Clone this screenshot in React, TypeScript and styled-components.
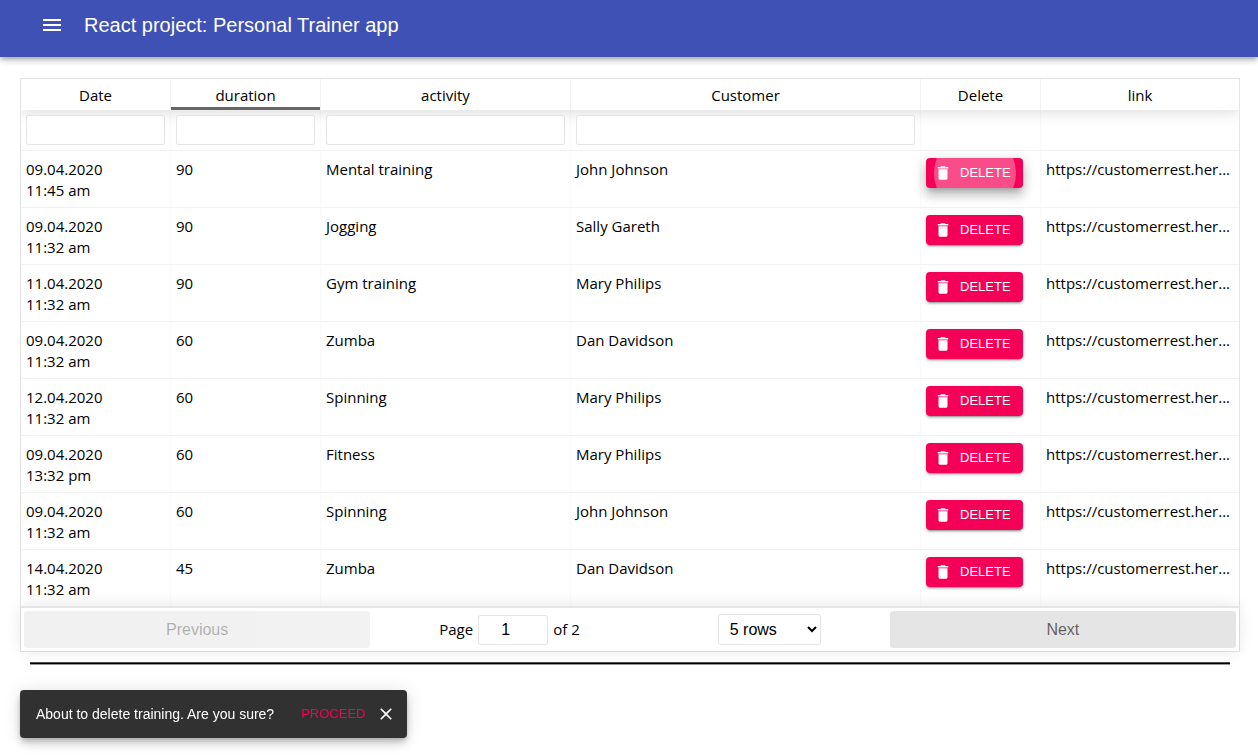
import React, { useState } from "react";
import styled, { createGlobalStyle, css } from "styled-components";

const sans = `"Liberation Sans", Arial, Helvetica, sans-serif`;
const body = `"Open Sans", "Noto Sans", sans-serif`;

const GlobalStyle = createGlobalStyle`
  * { box-sizing: border-box; }
  body { margin: 0; background: #fff; color: #000; font-family: ${body}; font-size: 15px; line-height: 21px; }
`;

const AppBar = styled.header`
  display: flex;
  align-items: center;
  gap: 8px;
  padding: 1px 28px 8px;
  color: #fff;
  background: #3f51b5;
  box-shadow: 0 2px 4px -1px rgba(0, 0, 0, 0.2), 0 4px 5px 0 rgba(0, 0, 0, 0.14), 0 1px 10px 0 rgba(0, 0, 0, 0.12);
`;

const MenuButton = styled.button`
  display: flex;
  padding: 12px;
  border: 0;
  color: inherit;
  background: transparent;
`;

const Icon = styled.svg<{ $size: number }>`
  display: block;
  flex: none;
  width: ${(p) => p.$size}px;
  height: ${(p) => p.$size}px;
  fill: currentColor;
`;

const Title = styled.h1`
  margin: 0;
  font: 400 20px/32px ${sans};
`;

const Main = styled.main`
  padding: 21px 18px 100px 20px;
`;

const Grid = styled.section`
  border: 1px solid rgba(0, 0, 0, 0.1);
`;

const TableClip = styled.div`
  overflow: hidden;
`;

const Table = styled.table`
  width: 100%;
  table-layout: fixed;
  border-collapse: separate;
  border-spacing: 0;
`;

const Col = styled.col<{ $width?: number }>`
  width: ${(p) => (p.$width ? `${p.$width}px` : "auto")};
`;

const Head = styled.thead`
  box-shadow: 0 2px 15px 0 rgba(0, 0, 0, 0.15);
`;

const HeadCell = styled.th<{ $sorted?: boolean }>`
  height: 31px;
  padding: 2px 5px 0;
  font-weight: 400;
  text-align: center;
  border-right: 1px solid rgba(0, 0, 0, 0.05);
  box-shadow: ${(p) => (p.$sorted ? "inset 0 -3px 0 0 rgba(0, 0, 0, 0.6)" : "none")};

  &:last-child { border-right: 0; }
`;

const Cell = styled.td`
  height: 57px;
  padding: 8px 5px 6px;
  vertical-align: top;
  overflow: hidden;
  white-space: nowrap;
  border-right: 1px solid rgba(0, 0, 0, 0.02);
  border-bottom: 1px solid rgba(0, 0, 0, 0.05);

  &:last-child { border-right: 0; }
`;

const FilterCell = styled(Cell)`
  height: 41px;
  padding: 5px;
`;

const BodyRow = styled.tr`
  &:last-child > td { height: 56px; border-bottom: 0; }
`;

const DateText = styled.time`
  display: block;
  width: 90px;
  white-space: normal;
`;

const field = css`
  border: 1px solid rgba(0, 0, 0, 0.1);
  border-radius: 3px;
  background: #fff;
  color: #000;
  outline: none;
`;

const FilterInput = styled.input`
  ${field}
  display: block;
  width: 100%;
  height: 30px;
  padding: 5px 7px;
  font: 400 15px/18px ${body};
`;

const ButtonCell = styled(Cell)`
  padding-top: 7px;
  overflow: visible;
`;

const DeleteButton = styled.button<{ $pressed?: boolean }>`
  position: relative;
  display: flex;
  align-items: center;
  gap: 8px;
  width: 97px;
  height: 30px;
  padding: 0 8px;
  overflow: hidden;
  border: 0;
  border-radius: 4px;
  color: #fff;
  background: #f50057;
  font: 400 13px/22px ${sans};
  box-shadow: ${(p) =>
    p.$pressed
      ? "0 5px 5px -3px rgba(0, 0, 0, 0.2), 0 8px 10px 1px rgba(0, 0, 0, 0.14), 0 3px 14px 2px rgba(0, 0, 0, 0.12)"
      : "0 3px 1px -2px rgba(0, 0, 0, 0.2), 0 2px 2px 0 rgba(0, 0, 0, 0.14), 0 1px 5px 0 rgba(0, 0, 0, 0.12)"};
`;

const Ripple = styled.span`
  position: absolute;
  top: 50%;
  left: 50%;
  width: 82px;
  height: 82px;
  border-radius: 50%;
  background: rgba(255, 255, 255, 0.3);
  transform: translate(-50%, -50%);
`;

const Pagination = styled.nav`
  position: relative;
  display: flex;
  padding: 3px;
  border-top: 2px solid rgba(0, 0, 0, 0.1);
  box-shadow: 0 0 15px 0 rgba(0, 0, 0, 0.1);
`;

const PageButton = styled.button`
  flex: 1;
  height: 37px;
  padding: 6px 0;
  border: 0;
  border-radius: 3px;
  color: rgba(0, 0, 0, 0.6);
  background: rgba(0, 0, 0, 0.1);
  font: 400 16px/24px ${sans};

  &:disabled { opacity: 0.5; }
`;

const PageControls = styled.div`
  flex: 1.5;
  display: flex;
  align-items: center;
  justify-content: space-around;
`;

const PageInfo = styled.label`
  display: flex;
  align-items: center;
  gap: 5px;
`;

const PageInput = styled.input`
  ${field}
  width: 70px;
  height: 30px;
  padding: 5px 22px 5px 7px;
  text-align: center;
  appearance: textfield;
  font: 400 16px/18px ${sans};

  &::-webkit-inner-spin-button { display: none; }
`;

const RowsSelect = styled.select`
  ${field}
  width: 103px;
  height: 31px;
  padding: 5px 0 5px 7px;
  font: 400 16px/18px ${sans};
`;

const Divider = styled.hr`
  height: 3px;
  margin: 10px 10px 0;
  border: 0;
  border-top: 1px solid #4d4d4d;
  border-bottom: 1px solid #999;
  background: #000;
`;

const Snackbar = styled.div`
  position: fixed;
  left: 20px;
  bottom: 18px;
  display: flex;
  align-items: center;
  height: 48px;
  padding: 0 8px 0 16px;
  border-radius: 4px;
  color: #fff;
  background: #313131;
  font: 400 14px/20px ${sans};
  box-shadow: 0 3px 5px -1px rgba(0, 0, 0, 0.2), 0 6px 10px 0 rgba(0, 0, 0, 0.14), 0 1px 18px 0 rgba(0, 0, 0, 0.12);
`;

const ProceedButton = styled.button`
  margin-left: 19px;
  padding: 4px 8px;
  border: 0;
  color: #f50057;
  background: transparent;
  font: 400 13px/22px ${sans};
`;

const CloseButton = styled.button`
  display: flex;
  padding: 3px;
  border: 0;
  color: inherit;
  background: transparent;
`;

const MenuIcon = () => (
  <Icon $size={24} viewBox="0 0 24 24" aria-hidden="true">
    <path d="M3 18h18v-2H3v2zm0-5h18v-2H3v2zm0-7v2h18V6H3z" />
  </Icon>
);

const TrashIcon = () => (
  <Icon $size={18} viewBox="0 0 24 24" aria-hidden="true">
    <path d="M6 19c0 1.1.9 2 2 2h8c1.1 0 2-.9 2-2V7H6v12zM19 4h-3.500l-1-1h-5l-1 1H5v2h14V4z" />
  </Icon>
);

const CloseIcon = () => (
  <Icon $size={20} viewBox="0 0 24 24" aria-hidden="true">
    <path d="M19 6.410L17.590 5 12 10.590 6.410 5 5 6.410 10.590 12 5 17.590 6.410 19 12 13.410 17.590 19 19 17.590 13.410 12z" />
  </Icon>
);

const columns = [
  { name: "Date", width: 150, filter: true },
  { name: "duration", width: 150, filter: true, sorted: true },
  { name: "activity", width: 250, filter: true },
  { name: "Customer", width: 350, filter: true },
  { name: "Delete", width: 120 },
  { name: "link" },
];

const trainings = [
  ["09.04.2020 11:45 am", 90, "Mental training", "John Johnson"],
  ["09.04.2020 11:32 am", 90, "Jogging", "Sally Gareth"],
  ["11.04.2020 11:32 am", 90, "Gym training", "Mary Philips"],
  ["09.04.2020 11:32 am", 60, "Zumba", "Dan Davidson"],
  ["12.04.2020 11:32 am", 60, "Spinning", "Mary Philips"],
  ["09.04.2020 13:32 pm", 60, "Fitness", "Mary Philips"],
  ["09.04.2020 11:32 am", 60, "Spinning", "John Johnson"],
  ["14.04.2020 11:32 am", 45, "Zumba", "Dan Davidson"],
];

export default function App() {
  const [pending, setPending] = useState<number | null>(0);

  return (
    <>
      <GlobalStyle />
      <AppBar>
        <MenuButton aria-label="Open menu">
          <MenuIcon />
        </MenuButton>
        <Title>React project: Personal Trainer app</Title>
      </AppBar>
      <Main>
        <Grid>
          <TableClip>
            <Table>
              <colgroup>
                {columns.map((c) => (
                  <Col key={c.name} $width={c.width} />
                ))}
              </colgroup>
              <Head>
                <tr>
                  {columns.map((c) => (
                    <HeadCell key={c.name} scope="col" $sorted={c.sorted}>
                      {c.name}
                    </HeadCell>
                  ))}
                </tr>
              </Head>
              <tbody>
                <tr>
                  {columns.map((c) => (
                    <FilterCell key={c.name}>
                      {c.filter && <FilterInput type="text" aria-label={`Filter by ${c.name}`} />}
                    </FilterCell>
                  ))}
                </tr>
                {trainings.map(([date, duration, activity, customer], i) => (
                  <BodyRow key={i}>
                    <Cell>
                      <DateText>{date}</DateText>
                    </Cell>
                    <Cell>{duration}</Cell>
                    <Cell>{activity}</Cell>
                    <Cell>{customer}</Cell>
                    <ButtonCell>
                      <DeleteButton $pressed={pending === i} onClick={() => setPending(i)}>
                        <TrashIcon />
                        DELETE
                        {pending === i && <Ripple />}
                      </DeleteButton>
                    </ButtonCell>
                    <Cell>https://customerrest.her...</Cell>
                  </BodyRow>
                ))}
              </tbody>
            </Table>
          </TableClip>
          <Pagination aria-label="Pagination">
            <PageButton disabled>Previous</PageButton>
            <PageControls>
              <PageInfo>
                Page
                <PageInput type="number" defaultValue={1} />
                of 2
              </PageInfo>
              <RowsSelect aria-label="Rows per page" defaultValue="5">
                <option value="5">5 rows</option>
                <option value="10">10 rows</option>
                <option value="20">20 rows</option>
              </RowsSelect>
            </PageControls>
            <PageButton>Next</PageButton>
          </Pagination>
        </Grid>
        <Divider />
      </Main>
      {pending !== null && (
        <Snackbar role="alert">
          About to delete training. Are you sure?
          <ProceedButton onClick={() => setPending(null)}>PROCEED</ProceedButton>
          <CloseButton aria-label="Close" onClick={() => setPending(null)}>
            <CloseIcon />
          </CloseButton>
        </Snackbar>
      )}
    </>
  );
}
